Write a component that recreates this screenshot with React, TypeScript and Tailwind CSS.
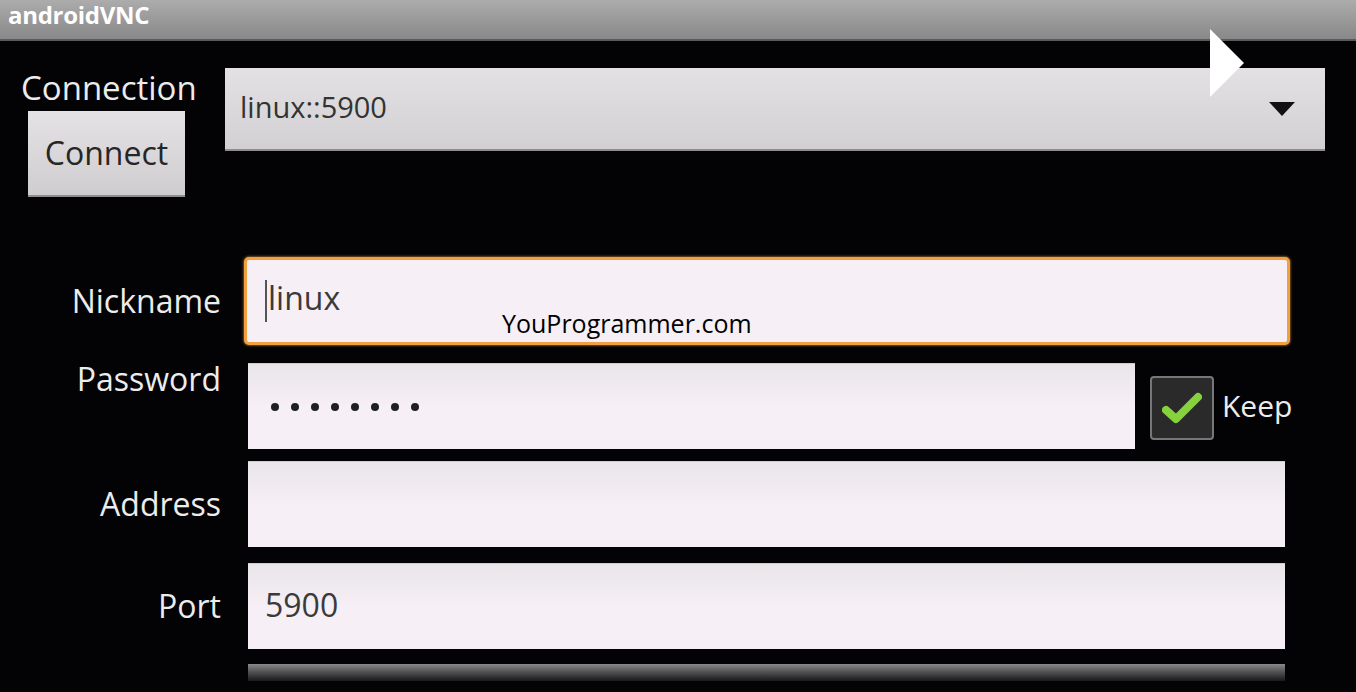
const font = { fontFamily: '"Open Sans", "DejaVu Sans", sans-serif' };

const Field = ({
  children,
  className = "",
}: {
  children?: React.ReactNode;
  className?: string;
}) => (
  <div
    className={
      "flex items-center h-[86px] bg-gradient-to-b from-[#e9e5e9] via-[#f6eff5] to-[#f6eff5] border-t border-[#cfcacf] px-[17px] text-[32px] text-[#3a3a3a] " +
      className
    }
  >
    {children}
  </div>
);

const Label = ({
  children,
  className = "",
}: {
  children: React.ReactNode;
  className?: string;
}) => (
  <div
    className={
      "w-[221px] shrink-0 text-right text-[32px] text-[#ececec] leading-none " +
      className
    }
  >
    {children}
  </div>
);

export default function App() {
  return (
    <div
      className="relative w-[1356px] h-[692px] overflow-hidden bg-[#030205]"
      style={font}
    >
      {/* title bar */}
      <div className="h-[41px] bg-gradient-to-b from-[#acacac] to-[#888888] border-b-2 border-[#5a5a5a] px-[8px] flex items-start">
        <span className="text-[24px] font-bold text-white leading-[30px] tracking-[-0.3px]">
          androidVNC
        </span>
      </div>

      {/* connection row */}
      <div className="flex items-start pt-[27px]">
        <div className="w-[225px] shrink-0 flex flex-col pl-[21px]">
          <div className="text-[33px] text-[#ececec] leading-none mt-[3px]">
            Connection
          </div>
          <div className="ml-[7px] mt-[7px] w-[157px] h-[86px] bg-gradient-to-b from-[#e4e2e4] to-[#cfcdcf] flex items-center justify-center text-[32px] text-[#262626] border-b-2 border-[#8f8d8f]">
            Connect
          </div>
        </div>
        <div className="w-[1100px] h-[83px] bg-gradient-to-b from-[#e3e1e3] to-[#d2d0d2] border-b-2 border-[#8e8c8e] flex items-center justify-between pl-[15px] pr-[30px]">
          <span className="text-[29px] text-[#333] -mt-[4px]">linux::5900</span>
          <svg width="26" height="14" viewBox="0 0 26 14" className="mt-[1px]">
            <polygon points="0,0 26,0 13,14" fill="#111" />
          </svg>
        </div>
      </div>

      {/* form */}
      <div className="flex flex-col mt-[60px]">
        <div className="flex items-center">
          <Label>Nickname</Label>
          <div className="ml-[23px] w-[1046px] h-[88px] rounded-[5px] border-[3px] border-[#f0a040] bg-[#f6eff5] flex items-center pl-[18px] text-[32px] text-[#3a3a3a] shadow-[0_0_3px_#f0a040]">
            <span className="w-[2px] h-[42px] bg-[#555] mr-[1px]" />
            <span className="-mt-[6px]">linux</span>
          </div>
        </div>

        <div className="flex items-start mt-[18px]">
          <Label>Password</Label>
          <Field className="ml-[27px] w-[887px] gap-[12px] pl-[23px]">
            {Array.from({ length: 8 }).map((_, i) => (
              <span key={i} className="w-[8px] h-[8px] rounded-full bg-[#1f1f1f]" />
            ))}
          </Field>
          <div className="ml-[15px] mt-[13px] w-[64px] h-[64px] rounded-[4px] border-2 border-[#777] bg-[#2a2a2a] flex items-center justify-center">
            <svg width="40" height="34" viewBox="0 0 40 34">
              <path
                d="M4 19 L14 28 L36 6"
                fill="none"
                stroke="#86d23c"
                strokeWidth="8"
                strokeLinecap="round"
                strokeLinejoin="round"
              />
            </svg>
          </div>
          <span className="ml-[8px] mt-[28px] text-[30px] text-[#ececec] leading-none">
            Keep
          </span>
        </div>

        <div className="flex items-center mt-[12px]">
          <Label>Address</Label>
          <Field className="ml-[27px] w-[1037px]" />
        </div>

        <div className="flex items-center mt-[16px]">
          <Label>Port</Label>
          <Field className="ml-[27px] w-[1037px]">
            <span className="-mt-[4px]">5900</span>
          </Field>
        </div>

        <div className="ml-[248px] mt-[15px] w-[1037px] h-[17px] bg-gradient-to-b from-[#8a8a8a] to-[#1a1a1a]" />
      </div>

      {/* video play overlay */}
      <svg
        width="36"
        height="70"
        viewBox="0 0 36 70"
        className="absolute left-[1209px] top-[29px]"
      >
        <polygon points="1,0 35,34 1,68" fill="#fff" />
      </svg>

      {/* watermark */}
      <div className="absolute left-[502px] top-[311px] text-[25px] text-black leading-none">
        YouProgrammer.com
      </div>
    </div>
  );
}
